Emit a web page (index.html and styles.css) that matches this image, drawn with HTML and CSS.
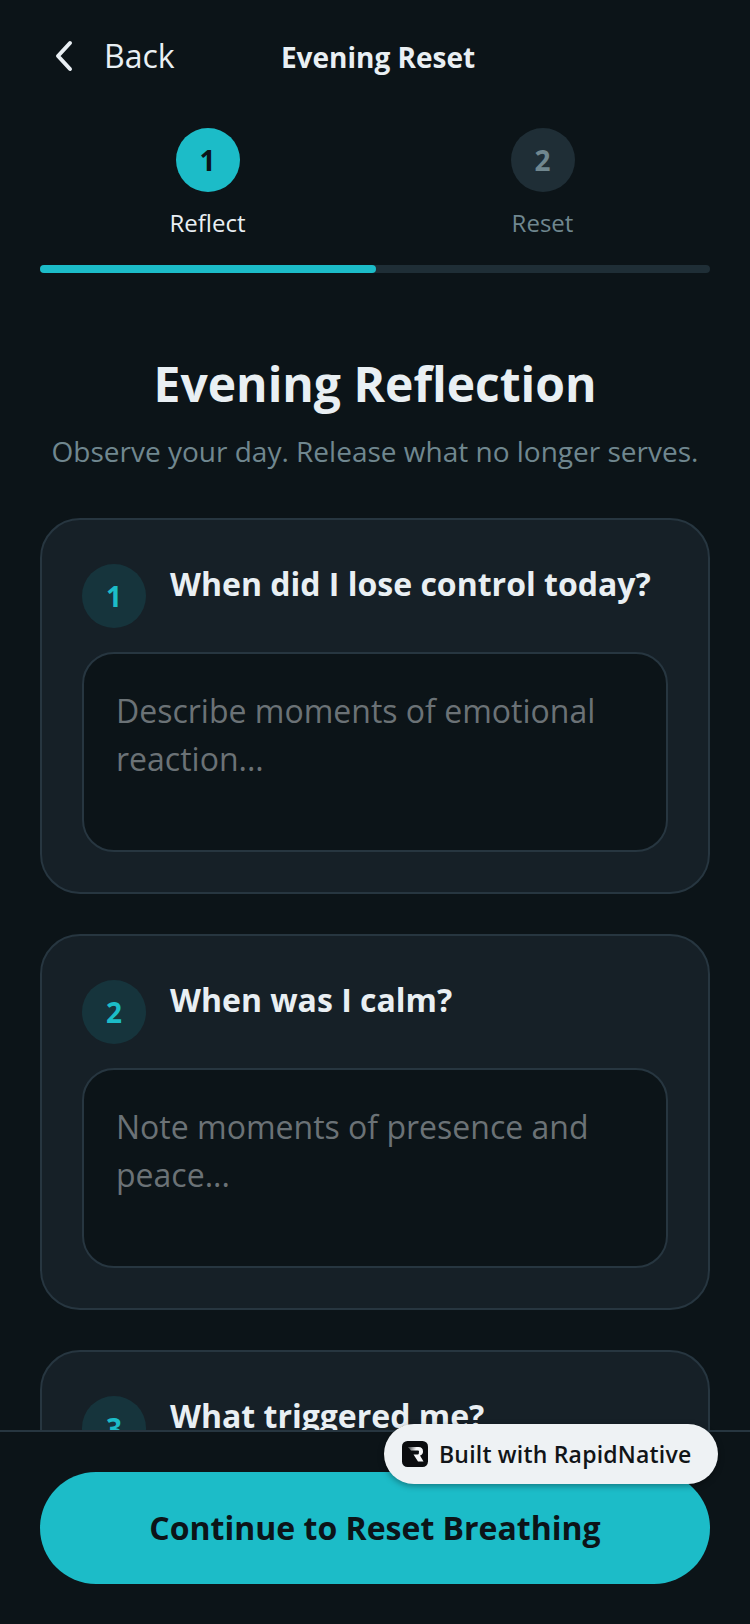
FILE: index.html
```html
<!DOCTYPE html>
<html lang="en">

<head>
  <meta charset="UTF-8">
  <title>Evening Reset</title>
  <link rel="stylesheet" href="styles.css">
</head>

<body>
  <div class="screen">
    <div class="content">
      <header class="topbar">
        <a class="back">
          <svg class="back-icon" width="24" height="32" viewBox="0 0 24 32" fill="none">
            <path d="M18 3 L6 16 L18 29" stroke="#e9eff3" stroke-width="4" stroke-linecap="round" stroke-linejoin="round" />
          </svg>
          <span>Back</span>
        </a>
        <div class="topbar-title">Evening Reset</div>
      </header>

      <div class="steps">
        <div class="step">
          <div class="step-dot active">1</div>
          <div class="step-label active">Reflect</div>
        </div>
        <div class="step">
          <div class="step-dot">2</div>
          <div class="step-label">Reset</div>
        </div>
      </div>
      <div class="progress">
        <div class="progress-fill"></div>
      </div>

      <h1 class="title">Evening Reflection</h1>
      <p class="subtitle">Observe your day. Release what no longer serves.</p>

      <section class="card">
        <div class="card-head">
          <div class="num">1</div>
          <div class="question">When did I lose control today?</div>
        </div>
        <div class="answer">Describe moments of emotional reaction...</div>
      </section>

      <section class="card">
        <div class="card-head">
          <div class="num">2</div>
          <div class="question">When was I calm?</div>
        </div>
        <div class="answer">Note moments of presence and peace...</div>
      </section>

      <section class="card">
        <div class="card-head">
          <div class="num">3</div>
          <div class="question">What triggered me?</div>
        </div>
        <div class="answer">Identify what set you off...</div>
      </section>
    </div>

    <footer class="footer">
      <button class="continue">Continue to Reset Breathing</button>
    </footer>

    <div class="badge">
      <svg class="badge-logo" width="26" height="26" viewBox="0 0 26 26">
        <defs>
          <linearGradient id="logo-fade" x1="0" y1="0" x2="1" y2="0.4">
            <stop offset="0.1" stop-color="#5a5d60" />
            <stop offset="0.5" stop-color="#f6f7f8" />
          </linearGradient>
        </defs>
        <rect width="26" height="26" rx="5.500" fill="#0b0d0f" />
        <path d="M6 6 H16.500 Q21 6 21 10.500 Q21 13.500 18 14.500 L21.500 20.500 H16 L11.500 13.500 H16 Q17 13.500 17 10.500 Q17 9.500 16 9.500 H9 Z" fill="url(#logo-fade)" />
      </svg>
      <span>Built with RapidNative</span>
    </div>
  </div>
</body>

</html>
```

FILE: styles.css
```css
* {
  box-sizing: border-box;
}

body {
  margin: 0;
  background: #0c1418;
  font-family: "Open Sans", sans-serif;
}

.screen {
  position: relative;
  display: flex;
  flex-direction: column;
  width: 750px;
  height: 1624px;
  overflow: hidden;
}

.content {
  flex: 1;
  min-height: 0;
  overflow: hidden;
  padding: 0 40px;
}

.topbar {
  position: relative;
  display: flex;
  align-items: center;
  height: 56px;
  margin-top: 27px;
}

.back {
  display: flex;
  align-items: center;
  gap: 28px;
  padding-left: 12px;
  color: #e9eff3;
  font-size: 32px;
}

.back-icon {
  margin-top: 1px;
}

.topbar-title {
  position: absolute;
  left: 6px;
  right: 0;
  top: 11px;
  text-align: center;
  color: #e9eff3;
  font-size: 28px;
  font-weight: 700;
  line-height: 38px;
}

.steps {
  display: flex;
  margin-top: 45px;
}

.step {
  flex: 1;
  display: flex;
  flex-direction: column;
  align-items: center;
}

.step-dot {
  display: flex;
  align-items: center;
  justify-content: center;
  width: 64px;
  height: 64px;
  border-radius: 50%;
  background: #1f2e36;
  color: #70878f;
  font-size: 28px;
  font-weight: 700;
}

.step-dot.active {
  background: #1cbcc8;
  color: #0c1418;
}

.step-label {
  margin-top: 14px;
  color: #70878f;
  font-size: 24px;
  line-height: 34px;
}

.step-label.active {
  color: #e9eff3;
}

.progress {
  height: 8px;
  margin-top: 25px;
  border-radius: 4px;
  background: #1f2e36;
}

.progress-fill {
  width: 336px;
  height: 100%;
  border-radius: 4px;
  background: #1cbcc8;
}

.title {
  margin: 78px 0 0;
  text-align: center;
  color: #e9eff3;
  font-size: 48px;
  font-weight: 700;
  line-height: 66px;
}

.subtitle {
  margin: 15px 0 48px;
  text-align: center;
  color: #70878f;
  font-size: 28px;
  line-height: 38px;
}

.card {
  margin-bottom: 40px;
  padding: 44px 40px 40px;
  border: 2px solid #273640;
  border-radius: 40px;
  background: #162027;
}

.card-head {
  display: flex;
  gap: 24px;
  margin-bottom: 24px;
}

.num {
  flex: none;
  display: flex;
  align-items: center;
  justify-content: center;
  width: 64px;
  height: 64px;
  border-radius: 50%;
  background: #16343c;
  color: #1cbcc8;
  font-size: 28px;
  font-weight: 700;
}

.question {
  margin-top: -2px;
  color: #e9eff3;
  font-size: 32px;
  font-weight: 700;
  line-height: 44px;
}

.answer {
  height: 200px;
  padding: 33px 32px 0;
  border: 2px solid #273640;
  border-radius: 32px;
  background: #0c1418;
  color: #6b7276;
  font-size: 32px;
  line-height: 47.500px;
}

.footer {
  flex: none;
  padding: 40px;
  border-top: 2px solid #273640;
  background: #0c1418;
}

.continue {
  display: block;
  width: 100%;
  height: 112px;
  padding-bottom: 3px;
  border: none;
  border-radius: 56px;
  background: #1cbcc8;
  color: #0c1418;
  font-family: inherit;
  font-size: 32px;
  font-weight: 700;
}

.badge {
  position: absolute;
  left: 384px;
  top: 1424px;
  display: flex;
  align-items: center;
  gap: 11px;
  width: 334px;
  height: 60px;
  padding-left: 18px;
  border-radius: 30px;
  background: #eef2f4;
  box-shadow: 0 2px 6px rgba(0, 0, 0, 0.35);
  color: #111518;
  font-size: 23px;
  font-weight: 600;
  letter-spacing: 0.2px;
}

.badge-logo {
  flex: none;
}
```
